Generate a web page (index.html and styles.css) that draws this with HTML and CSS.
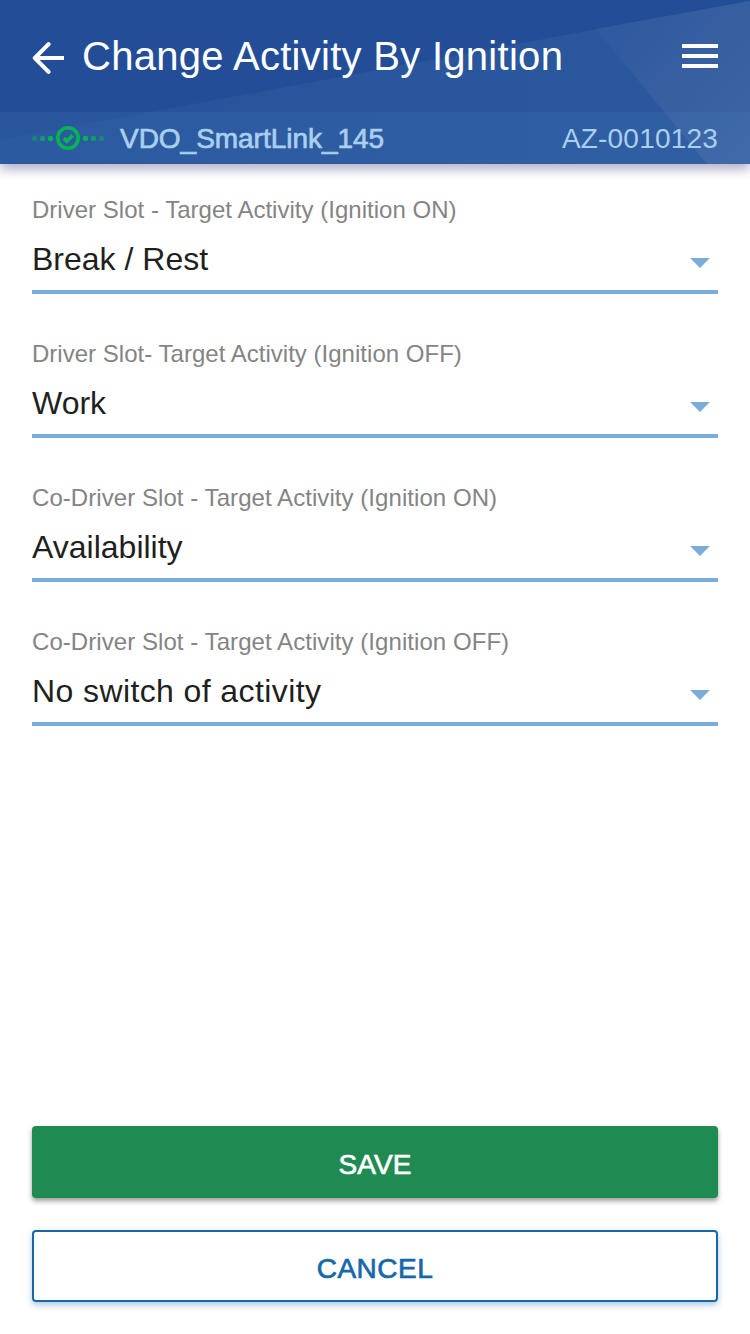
FILE: index.html
```html
<!DOCTYPE html>
<html lang="en">
<head>
<meta charset="utf-8">
<title>Change Activity By Ignition</title>
<link rel="stylesheet" href="styles.css">
</head>
<body>
<div class="screen">
  <header class="header">
    <svg class="facets" viewBox="0 0 750 164" preserveAspectRatio="none" aria-hidden="true">
      <defs>
        <linearGradient id="lower" x1="0" y1="0" x2="1" y2="0">
          <stop offset="0" stop-color="#27539a"/>
          <stop offset="1" stop-color="#2c589e"/>
        </linearGradient>
        <linearGradient id="right" x1="0" y1="0" x2="1" y2="1">
          <stop offset="0" stop-color="#2d599f"/>
          <stop offset=".45" stop-color="#365ea0"/>
          <stop offset="1" stop-color="#3e66a5"/>
        </linearGradient>
      </defs>
      <path fill="#234e97" d="M0 0h750v164H0z"/>
      <path fill="url(#lower)" d="M0 140L750 1v163H0z"/>
      <path fill="url(#right)" d="M596 29L750 1v163H707z"/>
    </svg>
    <div class="titlebar">
      <svg class="back" width="32" height="32" viewBox="0 0 32 32" fill="none" stroke="#fff" stroke-width="4"><path d="M32 16H3M16.6 2.2L2.8 16l13.8 13.8" stroke-linejoin="round" stroke-linecap="butt"/><path d="M16.2 2.6l.4-.4M16.2 29.4l.4.4" stroke-linecap="round"/></svg>
      <h1 class="title">Change Activity By Ignition</h1>
      <svg class="menu" width="36" height="24" viewBox="0 0 36 24" fill="#fff"><path d="M0 0h36v4H0zM0 10h36v4H0zM0 20h36v4H0z"/></svg>
    </div>
    <div class="device">
      <svg class="link" width="72" height="24" viewBox="0 0 72 24" fill="#06b552">
        <circle cx="2.6" cy="12.4" r="2.6" opacity=".45"/><circle cx="10.6" cy="12.4" r="2.6" opacity=".75"/><circle cx="18.5" cy="12.4" r="2.6"/>
        <circle cx="36" cy="12" r="10.2" fill="none" stroke="#06b552" stroke-width="3.6"/>
        <path d="M31.8 12.1l3 3 5.9-5.8" fill="none" stroke="#06b552" stroke-width="3.8"/>
        <circle cx="53.5" cy="12.4" r="2.6"/><circle cx="61.4" cy="12.4" r="2.6" opacity=".75"/><circle cx="69.4" cy="12.4" r="2.6" opacity=".45"/>
      </svg>
      <span class="device-name">VDO_SmartLink_145</span>
      <span class="plate">AZ-0010123</span>
    </div>
  </header>
  <main class="form">
    <div class="field">
      <label class="label">Driver Slot - Target Activity (Ignition ON)</label>
      <div class="select"><span class="value">Break / Rest</span><i class="caret"></i></div>
    </div>
    <div class="field">
      <label class="label">Driver Slot- Target Activity (Ignition OFF)</label>
      <div class="select"><span class="value">Work</span><i class="caret"></i></div>
    </div>
    <div class="field">
      <label class="label label-wide">Co-Driver Slot - Target Activity (Ignition ON)</label>
      <div class="select"><span class="value">Availability</span><i class="caret"></i></div>
    </div>
    <div class="field">
      <label class="label label-wide">Co-Driver Slot - Target Activity (Ignition OFF)</label>
      <div class="select"><span class="value value-wide">No switch of activity</span><i class="caret"></i></div>
    </div>
  </main>
  <footer class="actions">
    <button class="btn save">SAVE</button>
    <button class="btn cancel">CANCEL</button>
  </footer>
</div>
</body>
</html>
```
FILE: styles.css
```css
* { box-sizing: border-box; }
body { margin: 0; background: #fff; font-family: "Liberation Sans", Arial, sans-serif; }
.screen { width: 750px; height: 1334px; display: flex; flex-direction: column; overflow: hidden; }

.header { position: relative; height: 164px; box-shadow: 0 6px 10px rgba(30, 25, 100, .32); }
.facets { position: absolute; inset: 0; width: 100%; height: 100%; }
.titlebar { position: relative; height: 112px; padding: 0 32px; display: flex; align-items: center; }
.back { margin-top: 4px; flex: none; }
.title { margin: 0 0 1px 18px; font-size: 40px; line-height: 48px; font-weight: 400; color: #fff; white-space: nowrap; letter-spacing: .28px; }
.menu { margin-left: auto; flex: none; }
.device { position: relative; height: 52px; padding: 0 32px; display: flex; align-items: center; background: rgba(72, 130, 190, .16); color: #a9cfee; font-size: 28px; line-height: 36px; white-space: nowrap; }
.link { flex: none; }
.device-name { margin: 2px 0 0 16px; -webkit-text-stroke: .7px #a9cfee; letter-spacing: -.03px; }
.plate { margin: 2px 0 0 auto; letter-spacing: .2px; }

.form { padding: 30px 32px 0; display: flex; flex-direction: column; gap: 44px; }
.field { height: 100px; display: flex; flex-direction: column; }
.label { height: 32px; font-size: 24px; line-height: 32px; color: #848484; white-space: nowrap; letter-spacing: .02px; }
.label-wide { letter-spacing: .06px; }
.select { flex: 1; display: flex; justify-content: space-between; align-items: flex-start; border-bottom: 4px solid #7aaddc; }
.value { margin-top: 13px; font-size: 32px; line-height: 40px; color: #1f1f1f; white-space: nowrap; }
.value-wide { letter-spacing: .4px; }
.caret { width: 20px; height: 10px; margin: 32px 8px 0 0; background: #7aaddc; clip-path: polygon(0 0, 100% 0, 50% 100%); }

.actions { margin-top: auto; padding: 0 32px 32px; display: flex; flex-direction: column; gap: 32px; }
.btn { height: 72px; padding: 6px 0 0; border: 0; border-radius: 4px; font: 400 28px/36px "Liberation Sans", Arial, sans-serif; letter-spacing: .5px; }
.save { background: #1f8a52; color: #fff; -webkit-text-stroke: .7px #fff; box-shadow: 0 3px 5px rgba(0, 0, 0, .4); letter-spacing: .1px; }
.cancel { background: #fff; color: #1868a9; -webkit-text-stroke: .7px #1868a9; border: 2px solid #1868a9; box-shadow: 0 3px 6px rgba(24, 104, 169, .35); }
```
